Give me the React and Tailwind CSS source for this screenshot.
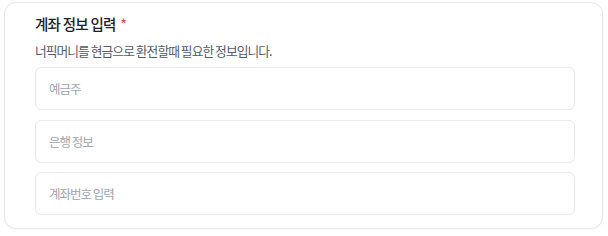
export default function App() {
  const fields = ['예금주', '은행 정보', '계좌번호 입력'];

  return (
    <div className="w-[608px] h-[236px] bg-white pt-[2px] pl-[4px]" style={{ fontFamily: '"Noto Sans CJK KR", "Noto Sans", sans-serif' }}>
      <div className="w-[599px] h-[227px] rounded-[12px] border border-[#e5e7eb] bg-white pt-[10px] pl-[30px] pr-[27px] shadow-[0_1px_2px_rgba(0,0,0,0.04)]">
        <div className="flex items-center gap-[5px] text-[14.5px] leading-[22px] font-medium tracking-[-0.75px] text-[#1c2027]">
          <span>계좌 정보 입력</span>
          <span className="text-[#ef4444] text-[13px]">*</span>
        </div>
        <p className="mt-[6px] text-[12.75px] leading-[20px] tracking-[-0.95px] text-[#555b65]">너픽머니를 현금으로 환전할때 필요한 정보입니다.</p>
        <div className="mt-[6px] flex flex-col gap-[9.5px]">
          {fields.map((label) => (
            <input
              key={label}
              type="text"
              placeholder={label}
              className="h-[43px] w-full rounded-[6px] border border-[#e8e9ec] bg-white px-[13px] text-[12.5px] tracking-[-1px] text-[#374151] placeholder:text-[#a0a4ab] outline-none"
            />
          ))}
        </div>
      </div>
    </div>
  );
}
